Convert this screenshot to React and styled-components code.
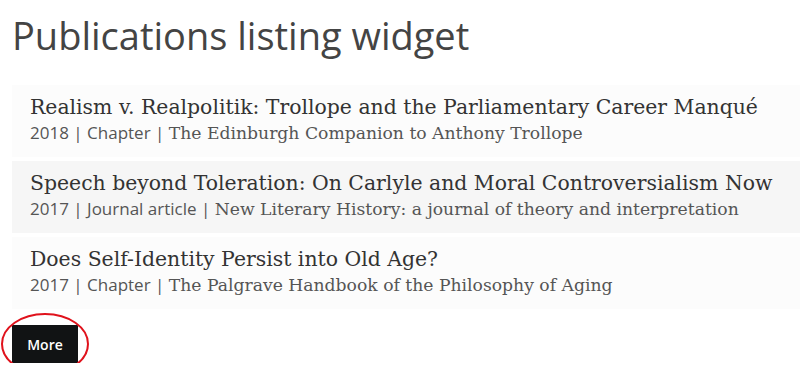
import React from "react";
import styled, { createGlobalStyle } from "styled-components";

const GlobalStyle = createGlobalStyle`
  body {
    margin: 0;
    background: #ffffff;
    font-family: 'Open Sans', sans-serif;
  }
`;

const Page = styled.div`
  padding: 10px 0 0 12px;
  display: flex;
  flex-direction: column;
`;

const Heading = styled.h1`
  margin: 0 0 25px 0;
  font-family: 'Open Sans', sans-serif;
  font-weight: 400;
  font-size: 38px;
  line-height: 50px;
  color: #444444;
`;

const List = styled.ul`
  list-style: none;
  margin: 0;
  padding: 0;
  display: flex;
  flex-direction: column;
  gap: 4px;
`;

const Item = styled.li`
  height: 72px;
  box-sizing: border-box;
  padding: 9px 18px 0 18px;
  background: ${(p) => (p.$shade ? "#f6f6f6" : "#fcfcfc")};
`;

const Title = styled.a`
  display: block;
  font-family: 'DejaVu Serif', serif;
  font-size: 20.4px;
  line-height: 26px;
  color: #333333;
  text-decoration: none;
`;

const Meta = styled.div`
  font-family: 'Open Sans', sans-serif;
  font-size: 17px;
  line-height: 26px;
  color: #555555;
`;

const Source = styled.span`
  font-family: 'DejaVu Serif', serif;
  font-size: 17.2px;
`;

const Footer = styled.div`
  position: relative;
  margin-top: 16px;
  align-self: flex-start;
`;

const MoreButton = styled.button`
  display: block;
  width: 66px;
  height: 38px;
  border: none;
  background: #111314;
  color: #ffffff;
  font-family: 'Open Sans', sans-serif;
  font-weight: 600;
  font-size: 14px;
  cursor: pointer;
`;

const Circle = styled.svg`
  position: absolute;
  left: -12px;
  top: -13px;
  pointer-events: none;
`;

const pubs = [
  {
    title: "Realism v. Realpolitik: Trollope and the Parliamentary Career Manqué",
    year: 2018,
    kind: "Chapter",
    source: "The Edinburgh Companion to Anthony Trollope",
  },
  {
    title: "Speech beyond Toleration: On Carlyle and Moral Controversialism Now",
    year: 2017,
    kind: "Journal article",
    source: "New Literary History: a journal of theory and interpretation",
  },
  {
    title: "Does Self-Identity Persist into Old Age?",
    year: 2017,
    kind: "Chapter",
    source: "The Palgrave Handbook of the Philosophy of Aging",
  },
];

export default function App() {
  return (
    <>
      <GlobalStyle />
      <Page>
        <Heading>Publications listing widget</Heading>
        <List>
          {pubs.map((p, i) => (
            <Item key={p.title} $shade={i === 1}>
              <Title href="#">{p.title}</Title>
              <Meta>
                {p.year} | {p.kind} | <Source>{p.source}</Source>
              </Meta>
            </Item>
          ))}
        </List>
        <Footer>
          <MoreButton>More</MoreButton>
          <Circle width="92" height="64" viewBox="0 0 92 64">
            <ellipse cx="45" cy="32" rx="43" ry="30" fill="none" stroke="#e0121c" strokeWidth="2" />
          </Circle>
        </Footer>
      </Page>
    </>
  );
}
